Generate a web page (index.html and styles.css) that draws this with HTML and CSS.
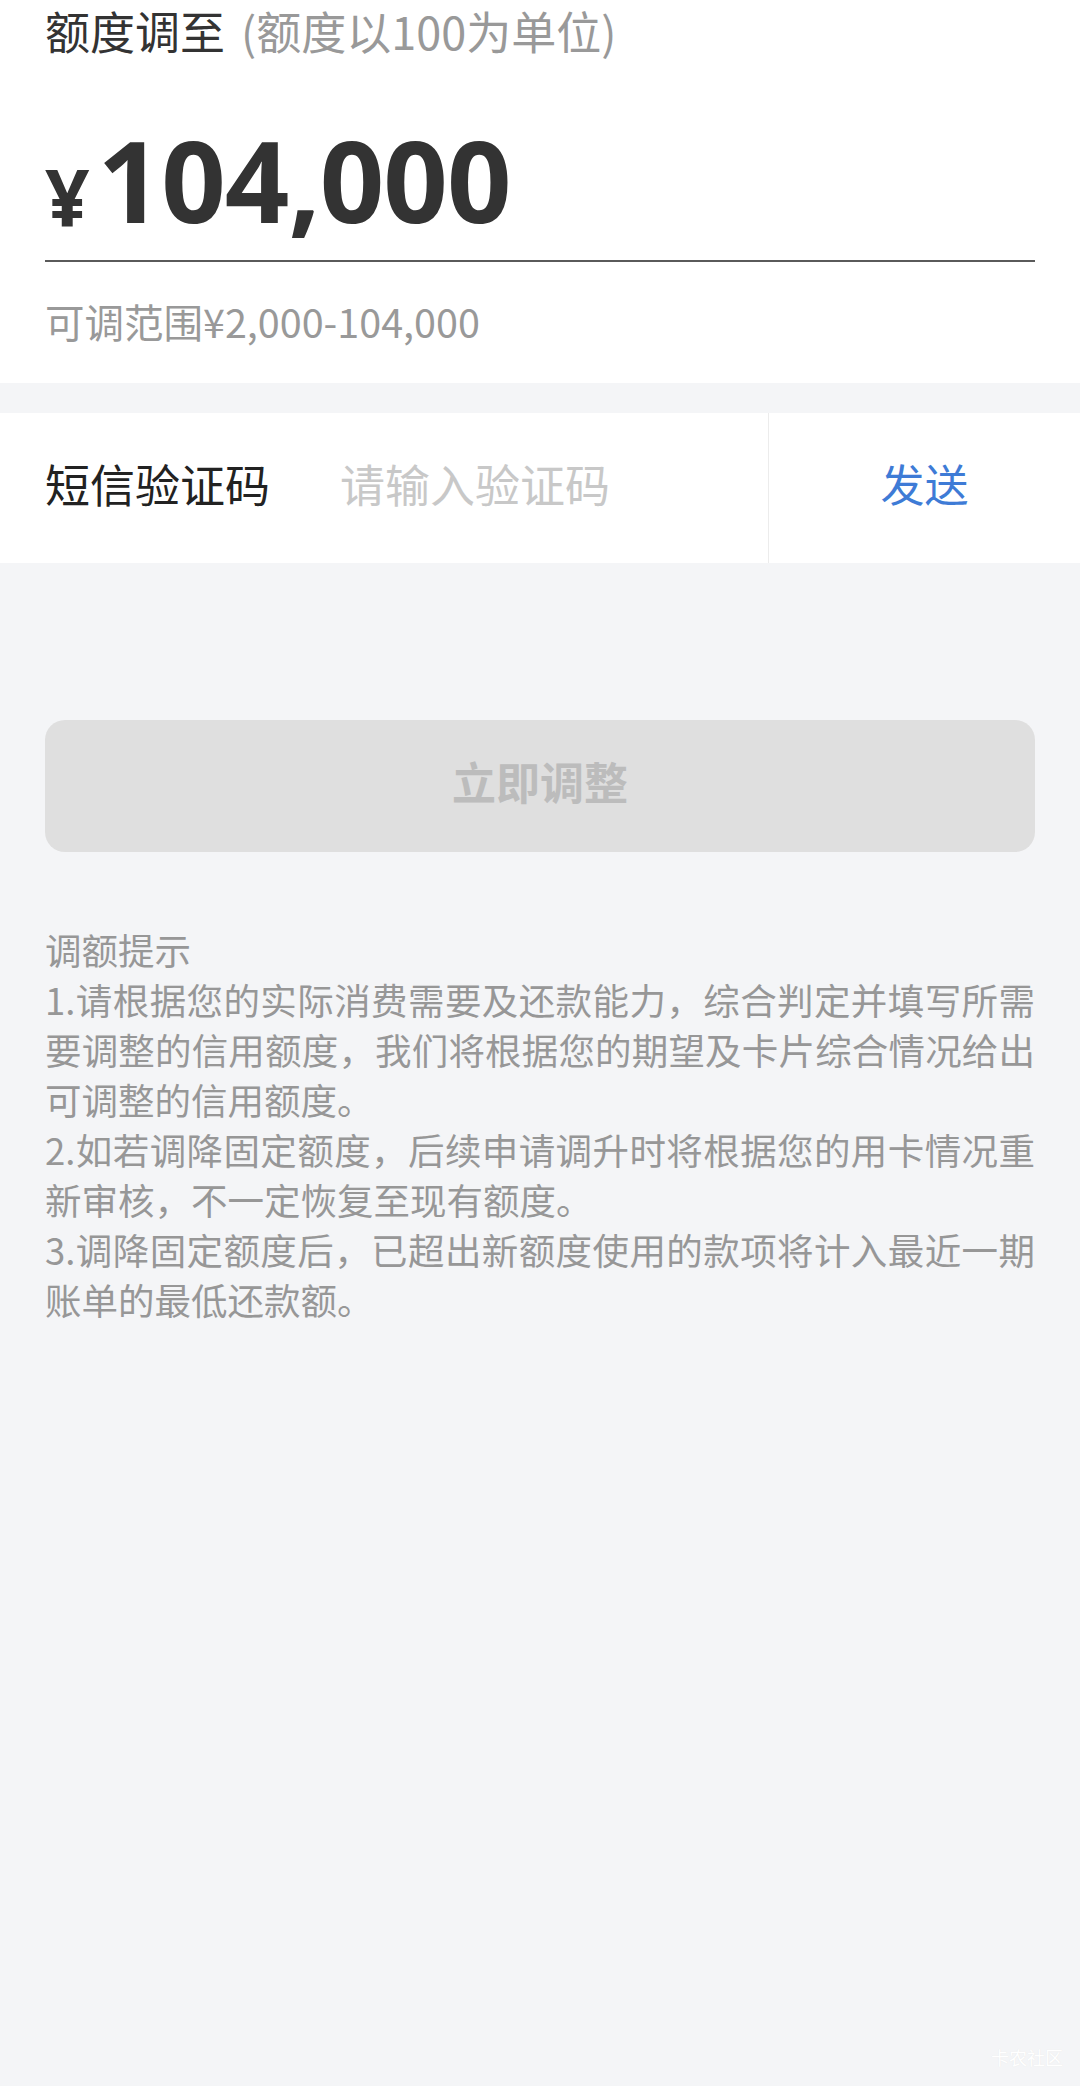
FILE: index.html
```html
<!DOCTYPE html>
<html lang="zh-CN">
<head>
    <meta charset="UTF-8">
    <meta name="viewport" content="width=device-width, initial-scale=1.0">
    <title>额度调整</title>
    <link rel="stylesheet" href="styles.css">
</head>
<body>
    <section class="card">
        <div class="title">额度调至<span class="title-note">(额度以100为单位)</span></div>
        <div class="amount">
            <span class="currency">¥</span><span class="value">104,000</span>
        </div>
        <div class="range">可调范围¥2,000-104,000</div>
    </section>

    <form class="sms-row">
        <label for="code" class="sms-label">短信验证码</label>
        <input type="text" id="code" class="sms-input" placeholder="请输入验证码">
        <button type="button" class="sms-send">发送</button>
    </form>

    <button type="button" class="submit" disabled>立即调整</button>

    <div class="tips">
        <p>调额提示</p>
        <p>1.请根据您的实际消费需要及还款能力，综合判定并填写所需要调整的信用额度，我们将根据您的期望及卡片综合情况给出可调整的信用额度。</p>
        <p>2.如若调降固定额度，后续申请调升时将根据您的用卡情况重新审核，不一定恢复至现有额度。</p>
        <p>3.调降固定额度后，已超出新额度使用的款项将计入最近一期账单的最低还款额。</p>
    </div>

    <div class="watermark">卡农社区</div>
</body>
</html>
```

FILE: styles.css
```css
/* Global */
html {
    background-color: #f4f5f7;
}
body {
    margin: 0;
    min-height: 2086px;
    position: relative;
    font-family: "Noto Sans CJK SC", sans-serif;
    color: #333;
    background-color: #f4f5f7;
}

/* Top card */
.card {
    background-color: #fff;
    padding: 0 45px;
}
.title {
    font-size: 45px;
    line-height: 62px;
    padding-bottom: 2px;
    color: #333;
}
.title-note {
    margin-left: 16px;
    color: #999;
}
.amount {
    display: flex;
    align-items: baseline;
    padding-top: 40px;
    padding-bottom: 6px;
    height: 150px;
    line-height: 150px;
    border-bottom: 2px solid #5a5a5a;
    font-family: "Open Sans", Roboto, "Noto Sans CJK SC", sans-serif;
    font-weight: 700;
    color: #333;
}
.currency {
    font-size: 78px;
    line-height: 1;
    margin-right: 8px;
    position: relative;
    top: 4px;
}
.value {
    font-size: 113px;
    letter-spacing: -1px;
}
.range {
    font-size: 39.5px;
    line-height: 118px;
    padding-bottom: 3px;
    color: #999;
}

/* SMS row */
.sms-row {
    display: flex;
    align-items: stretch;
    height: 150px;
    margin: 30px 0 0;
    background-color: #fff;
}
.sms-label {
    display: flex;
    align-items: center;
    padding-left: 45px;
    padding-bottom: 10px;
    width: 295px;
    font-size: 45px;
    color: #222;
}
.sms-input {
    flex: 1;
    min-width: 0;
    border: none;
    outline: none;
    padding: 0 0 10px;
    background: transparent;
    font-family: inherit;
    font-size: 45px;
    color: #333;
}
.sms-input::placeholder {
    color: #c8c8c8;
}
.sms-send {
    width: 312px;
    border: none;
    border-left: 1px solid #ececec;
    background-color: #fff;
    font-family: inherit;
    font-size: 44px;
    color: #3e7bd6;
    padding: 0 0 10px;
}

/* Submit */
.submit {
    display: block;
    width: 990px;
    height: 132px;
    margin: 157px 45px 0;
    padding: 0 0 10px;
    border: none;
    border-radius: 20px;
    background-color: #dfdfdf;
    font-family: inherit;
    font-size: 44px;
    font-weight: 700;
    color: #bcbcbc;
}

/* Tips */
.tips {
    margin-top: 73px;
    padding: 0 45px;
    font-size: 36.5px;
    line-height: 50px;
    color: #979797;
    text-align: justify;
}
.tips p {
    margin: 0;
}

/* Watermark overlay */
.watermark {
    position: absolute;
    right: 17px;
    top: 2044px;
    font-size: 18px;
    color: #fff;
    text-shadow: 0 0 1px #e4e4e4;
}
```
